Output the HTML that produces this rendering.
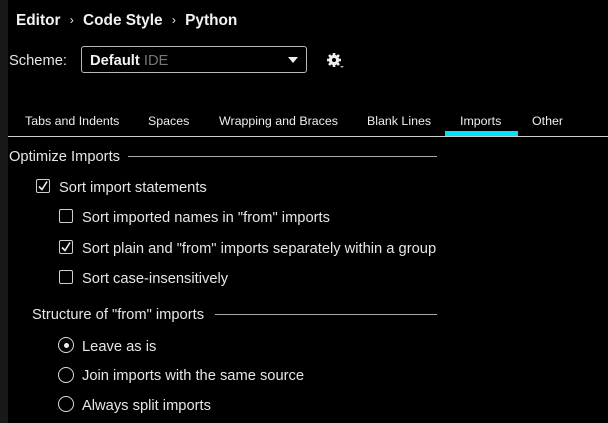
<html><head><style>
body{margin:0;width:608px;height:423px;background:#000;font-family:"Liberation Sans",Arial,sans-serif;color:#e6e6e6;position:relative;overflow:hidden}
.a{position:absolute;white-space:nowrap}
.strip{left:0;top:0;width:8px;height:423px;background:#16181a}
.t{font-size:14.7px;line-height:16px}
.cb{position:absolute;width:14px;height:14px;border:1.3px solid #cfcfcf;border-radius:2px;box-sizing:border-box}
.rb{position:absolute;width:16px;height:16px;border:1.3px solid #dcdcdc;border-radius:50%;box-sizing:border-box}
.tab{font-size:12.4px;top:114px;color:#eee}
.ck{position:absolute}
</style></head><body>
<div class="a strip"></div>
<div class="a" style="left:16px;top:12px;font-size:15.4px;font-weight:bold;color:#f2f2f2">Editor <span style="font-weight:normal;font-size:12px;margin:0 5px;position:relative;top:-1px">›</span> Code Style <span style="font-weight:normal;font-size:12px;margin:0 5px;position:relative;top:-1px">›</span> Python</div>
<div class="a t" style="left:9px;top:53px">Scheme:</div>
<div class="a" style="left:81px;top:46px;width:224px;height:25px;border:1px solid #bbb;border-radius:3px"></div>
<div class="a" style="left:90px;top:53px;font-size:14.7px;font-weight:bold;color:#f2f2f2">Default <span style="font-weight:normal;color:#777">IDE</span></div>
<div class="a" style="left:288px;top:57px;width:0;height:0;border-left:5px solid transparent;border-right:5px solid transparent;border-top:6px solid #eee"></div>
<svg class="a" style="left:326px;top:51px" width="20" height="20" viewBox="0 0 20 20"><g fill="#eee"><circle cx="8" cy="9" r="5.2"/><g stroke="#eee" stroke-width="2.6"><line x1="8" y1="2" x2="8" y2="16"/><line x1="1" y1="9" x2="15" y2="9"/><line x1="3" y1="4" x2="13" y2="14"/><line x1="13" y1="4" x2="3" y2="14"/></g></g><circle cx="8" cy="9" r="2" fill="#000"/><path d="M14 15h4l-2 2z" fill="#aaa"/></svg>
<div class="a tab" style="left:25px">Tabs and Indents</div>
<div class="a tab" style="left:148px">Spaces</div>
<div class="a tab" style="left:219px">Wrapping and Braces</div>
<div class="a tab" style="left:367px">Blank Lines</div>
<div class="a tab" style="left:460px">Imports</div>
<div class="a tab" style="left:532px">Other</div>
<div class="a" style="left:8px;top:136px;width:600px;height:1px;background:#ccc"></div>
<div class="a" style="left:445px;top:131px;width:73px;height:5px;background:#00e5f5"></div>
<div class="a t" style="left:9px;top:149px">Optimize Imports</div>
<div class="a" style="left:128px;top:156px;width:309px;height:1px;background:#aaa"></div>
<div class="cb" style="left:36px;top:179px"></div><svg class="ck" style="left:36px;top:179px" width="14" height="14"><path d="M3 7.5l3 3 5-8" fill="none" stroke="#eee" stroke-width="1.6"/></svg>
<div class="a t" style="left:59px;top:180px">Sort import statements</div>
<div class="cb" style="left:59px;top:209px"></div>
<div class="a t" style="left:82px;top:210px">Sort imported names in "from" imports</div>
<div class="cb" style="left:59px;top:240px"></div><svg class="ck" style="left:59px;top:240px" width="14" height="14"><path d="M3 7.5l3 3 5-8" fill="none" stroke="#eee" stroke-width="1.6"/></svg>
<div class="a t" style="left:82px;top:241px">Sort plain and "from" imports separately within a group</div>
<div class="cb" style="left:59px;top:270px"></div>
<div class="a t" style="left:82px;top:271px">Sort case-insensitively</div>
<div class="a t" style="left:32px;top:307px">Structure of "from" imports</div>
<div class="a" style="left:215px;top:314px;width:222px;height:1px;background:#aaa"></div>
<div class="rb" style="left:58px;top:337px"></div><div class="a" style="left:63.5px;top:342.5px;width:5px;height:5px;border-radius:50%;background:#eee"></div>
<div class="a t" style="left:82px;top:339px">Leave as is</div>
<div class="rb" style="left:58px;top:367px"></div>
<div class="a t" style="left:82px;top:368px">Join imports with the same source</div>
<div class="rb" style="left:58px;top:396px"></div>
<div class="a t" style="left:82px;top:398px">Always split imports</div>
</body></html>
